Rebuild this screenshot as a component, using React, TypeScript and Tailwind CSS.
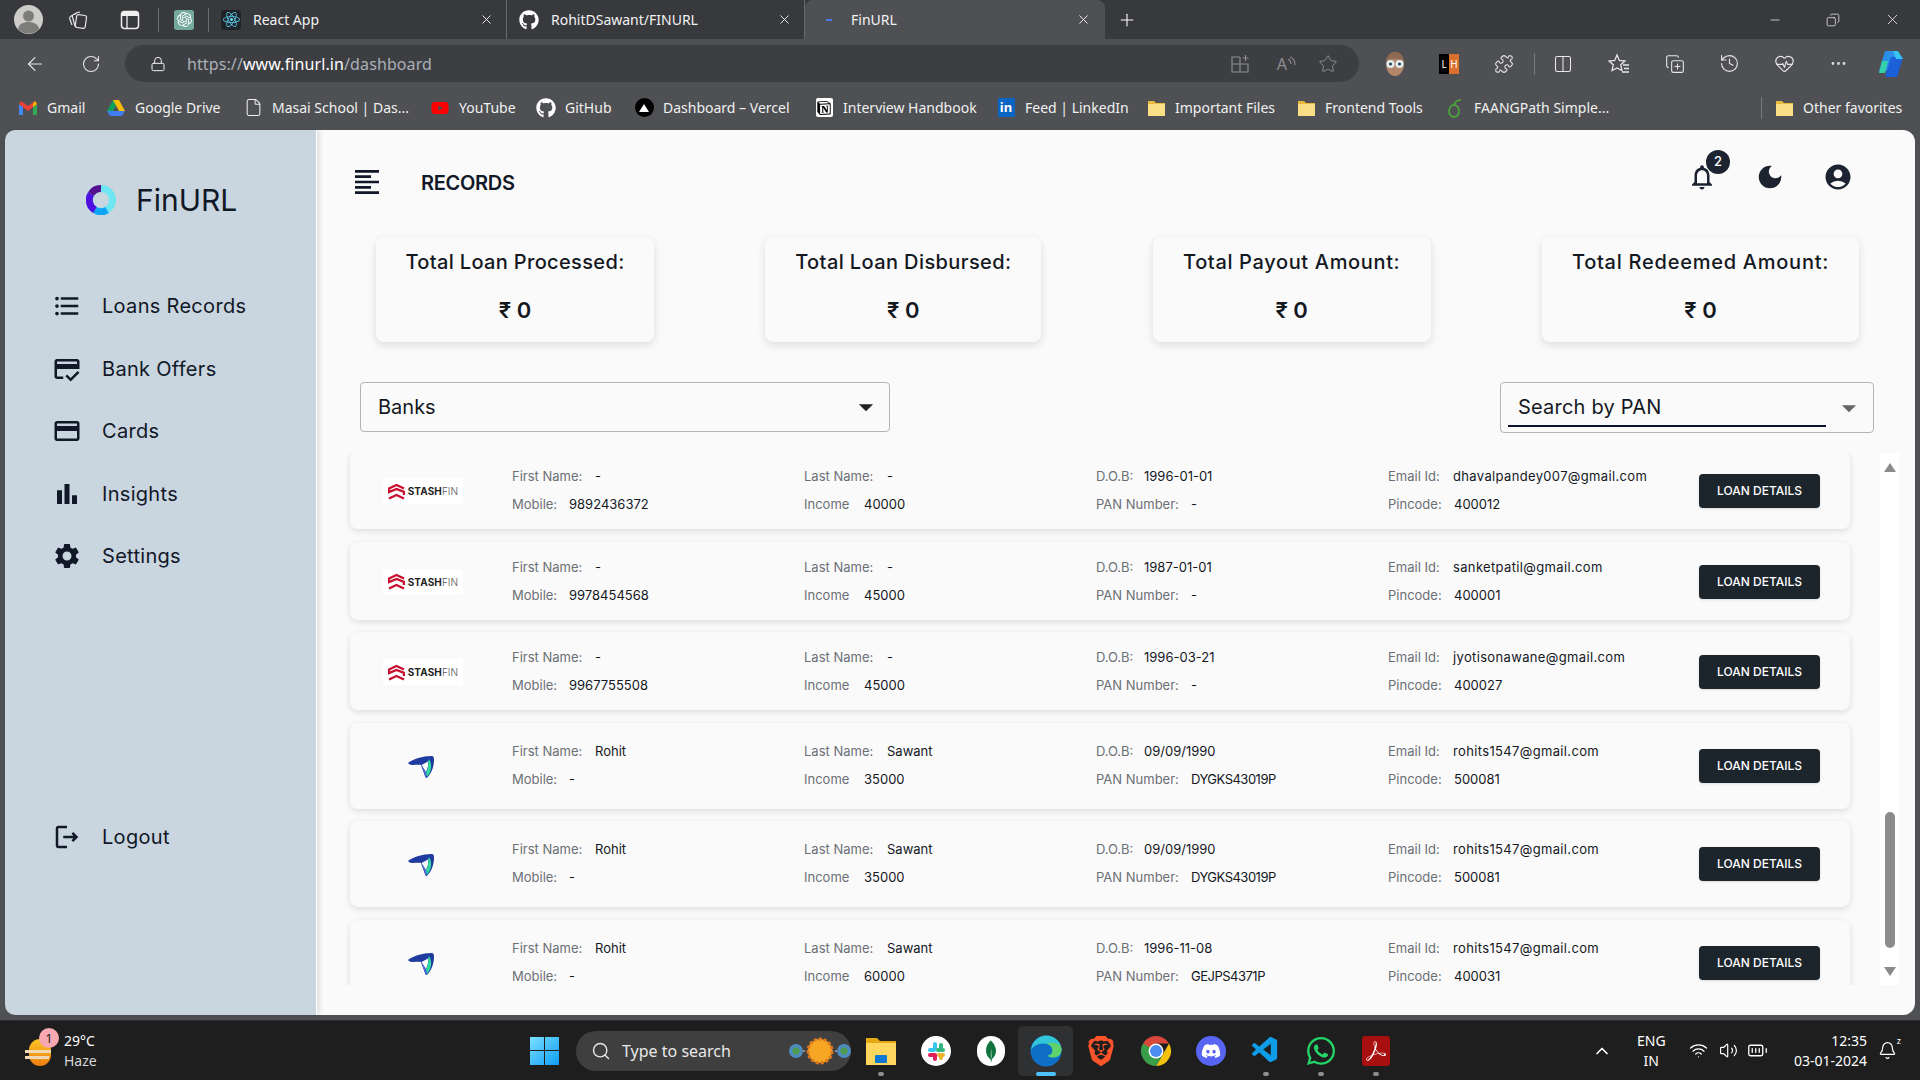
import type { ReactNode } from 'react'
import {
  ArrowLeft,
  RotateCw,
  Lock,
  Star,
  X,
  Plus,
  Minus,
  Copy,
  File,
  Search,
  ChevronUp,
  Wifi,
  Volume2,
  BatteryFull,
  Bell,
  Puzzle,
  Columns2,
  History,
  HeartPulse,
  MoreHorizontal,
  CopyPlus,
} from 'lucide-react'
import {
  MdFormatAlignLeft,
  MdFormatListBulleted,
  MdOutlineCreditScore,
  MdOutlineCreditCard,
  MdBarChart,
  MdSettings,
  MdOutlineLogout,
  MdOutlineNotifications,
  MdDarkMode,
  MdAccountCircle,
  MdArrowDropDown,
} from 'react-icons/md'
import { FaGithub, FaYoutube, FaDiscord, FaWhatsapp, FaReact } from 'react-icons/fa'
import { SiNotion, SiOpenai, SiAdobeacrobatreader, SiBrave, SiMongodb } from 'react-icons/si'
import { VscVscode } from 'react-icons/vsc'

const uiFont = "font-['Noto_Sans',sans-serif]"
const appFont = "font-['Inter',sans-serif]"

function Folder() {
  return (
    <svg width="19" height="18" viewBox="0 0 19 18">
      <path d="M1 2h6l2 2h9v13H1z" fill="#e8b93c" />
      <rect x="1" y="5" width="17" height="12" rx="1" fill="#fbdf86" />
    </svg>
  )
}

function Gmail() {
  return (
    <svg width="20" height="16" viewBox="0 0 20 16">
      <path d="M1 4v11h4V7z" fill="#4285f4" />
      <path d="M15 7v8h4V4z" fill="#34a853" />
      <path d="M1 4l9 7 9-7-2-3-7 5-7-5z" fill="#ea4335" />
      <path d="M15 4l2-3 2 3-4 3z" fill="#fbbc04" />
    </svg>
  )
}

function Drive() {
  return (
    <svg width="20" height="18" viewBox="0 0 20 18">
      <path d="M7 1h6l-6 11H1z" fill="#0fa15a" />
      <path d="M7 1h6l6 11h-6z" fill="#fbbc04" />
      <path d="M1 12l3 5h12l3-5z" fill="#3f7df0" />
    </svg>
  )
}

function Bookmark({ icon, label, className }: { icon: ReactNode; label: string; className: string }) {
  return (
    <div className={`flex items-center gap-[9px] shrink-0 ${className}`}>
      <span className="w-[20px] flex justify-center shrink-0">{icon}</span>
      <span className="whitespace-nowrap">{label}</span>
    </div>
  )
}

function Tab({ icon, label, active = false }: { icon: ReactNode; label: string; active?: boolean }) {
  return (
    <div
      className={`flex items-center h-[39px] shrink-0 text-[14px] ${
        active ? 'w-[300px] bg-[#4f5054] rounded-t-[8px] pl-[14px] pr-[14px]' : 'w-[298px] pl-[12px] pr-[12px] border-r border-[#6a6b6f]'
      }`}
    >
      <span className="w-[20px] flex justify-center mr-[12px]">{icon}</span>
      <span className="flex-1 text-[#f2f2f2]">{label}</span>
      <X size={15} strokeWidth={1.4} className="text-white" />
    </div>
  )
}

function BrowserChrome() {
  const tool = 'text-[#e6e6e6] shrink-0'
  return (
    <div className={`${uiFont} text-[#f0f0f0]`}>
      <div className="h-[39px] bg-[#38393d] flex items-center">
        <svg width="29" height="29" viewBox="0 0 29 29" className="ml-[14px] shrink-0">
          <circle cx="14.5" cy="14.500" r="14.500" fill="#cdccc8" />
          <circle cx="14.500" cy="11" r="5.500" fill="#7c7c7a" />
          <path d="M4 24c1-5 5-7 10.500-7s9.500 2 10.500 7a14.500 14.500 0 0 1-21 0z" fill="#7c7c7a" />
        </svg>
        <svg width="22" height="22" viewBox="0 0 22 22" fill="none" stroke="#e6e6e6" strokeWidth="1.2" className="ml-[24px] shrink-0">
          <rect x="9" y="6" width="10" height="13" rx="2" transform="rotate(8 14 12)" />
          <path d="M9 4.500 6.500 5.500c-1 .5-1.500 1.500-1 2.500l2.500 9" />
          <path d="M13 3 9.500 3.800c-1 .3-1.500 1-1.300 2" />
          <path d="M5 6.500 3.500 7.500c-1 .6-1 1.500-.7 2.500l2.200 6" />
        </svg>
        <svg width="20" height="20" viewBox="0 0 20 20" className="ml-[31px] shrink-0">
          <rect x="1.500" y="1.500" width="17" height="17" rx="3" fill="none" stroke="#efefef" strokeWidth="1.500" />
          <path d="M3 2h14c1 0 1 1 1 2v2H2V4c0-1 0-2 1-2z" fill="#efefef" />
          <path d="M7 6v12" stroke="#efefef" strokeWidth="1.300" />
        </svg>
        <div className="ml-[18px] w-px h-[24px] bg-[#6a6b6f]" />
        <div className="ml-[15px] w-[20px] h-[20px] rounded-[3px] bg-[#74aa9c] flex items-center justify-center">
          <SiOpenai size={15} className="text-white" />
        </div>
        <div className="ml-[14px] w-px h-[24px] bg-[#6a6b6f]" />
        <Tab icon={<span className="w-[20px] h-[20px] bg-[#20232a] rounded-[3px] flex items-center justify-center"><FaReact size={17} className="text-[#61dafb]" /></span>} label="React App" />
        <Tab icon={<FaGithub size={20} className="text-white" />} label="RohitDSawant/FINURL" />
        <Tab active icon={<span className="w-[6px] h-[2px] bg-[#4a7cf0]" />} label="FinURL" />
        <Plus size={20} strokeWidth={1.3} className="ml-[12px] text-white" />
        <div className="ml-auto flex items-center">
          <Minus size={14} strokeWidth={1.3} className="mr-[44px] text-[#eee]" />
          <Copy size={14} strokeWidth={1.3} className="mr-[44px] text-[#eee] -scale-x-100" />
          <X size={17} strokeWidth={1.2} className="mr-[19px] text-[#eee]" />
        </div>
      </div>
      <div className="h-[46px] bg-[#4f5054] flex items-center pt-[3px]">
        <ArrowLeft size={22} strokeWidth={1.3} className={`ml-[24px] ${tool}`} />
        <RotateCw size={20} strokeWidth={1.3} className={`ml-[35px] ${tool}`} />
        <div className="ml-[24px] w-[1234px] h-[37px] rounded-full bg-[#3d3e42] flex items-center shrink-0">
          <Lock size={16} strokeWidth={1.5} className="ml-[25px] text-[#efefef]" />
          <span className="ml-[21px] text-[16px] tracking-[0.1px] text-[#a9b0b8]">
            https://<span className="text-white">www.finurl.in</span>/dashboard
          </span>
          <svg width="20" height="20" viewBox="0 0 20 20" fill="none" stroke="#8c8d90" strokeWidth="1.200" className="ml-auto">
            <path d="M10 3H2v15h16v-8H2M10 3v15" />
            <path d="M15.500 1v6M12.500 4h6" />
          </svg>
          <span className="ml-[27px] text-[16px] leading-none text-[#8c8d90]">A</span>
          <svg width="9" height="16" viewBox="0 0 9 16" fill="none" stroke="#8c8d90" strokeWidth="1.100">
            <path d="M1 3c2 1 3 3 3 5M3 1c3 1 5 4 5 8" />
          </svg>
          <Star size={20} strokeWidth={1.2} className="ml-[22px] mr-[21px] text-[#8c8d90]" />
        </div>
        <svg width="24" height="26" viewBox="0 0 24 26" className="ml-[24px] shrink-0">
          <ellipse cx="12" cy="13" rx="9" ry="12" fill="#b4876b" />
          <path d="M3 10c1-6 5-9 9-9s8 3 9 9c-5-3-13-3-18 0z" fill="#8f6a52" />
          <circle cx="7.500" cy="13" r="4" fill="#dfeef0" />
          <circle cx="16.500" cy="13" r="4" fill="#dfeef0" />
          <circle cx="7.500" cy="13" r="1.500" fill="#2b3a44" />
          <circle cx="16.500" cy="13" r="1.500" fill="#2b3a44" />
        </svg>
        <div className="ml-[32px] w-[20px] h-[20px] flex shrink-0 text-[10px] leading-[20px] text-center text-white">
          <span className="w-1/2 bg-black">L</span>
          <span className="w-1/2 bg-[#d9702b]">H</span>
        </div>
        <Puzzle size={20} strokeWidth={1.3} className={`ml-[35px] ${tool}`} />
        <div className="ml-[20px] w-px h-[22px] bg-[#77787c] shrink-0" />
        <Columns2 size={20} strokeWidth={1.3} className={`ml-[18px] ${tool}`} />
        <svg width="22" height="22" viewBox="0 0 22 22" fill="none" stroke="#e6e6e6" strokeWidth="1.300" className="ml-[35px] shrink-0">
          <path d="M9 2l2.300 5.500 5.700.5-4.300 3.800 1.300 5.700L9 15 4 17.500l1.300-5.700L1 8l5.700-.5z" />
          <path d="M15 12h6M16 15.500h5M14 19h7" />
        </svg>
        <CopyPlus size={20} strokeWidth={1.3} className={`ml-[35px] ${tool}`} />
        <History size={21} strokeWidth={1.3} className={`ml-[34px] ${tool}`} />
        <HeartPulse size={21} strokeWidth={1.3} className={`ml-[34px] ${tool}`} />
        <MoreHorizontal size={19} strokeWidth={1.5} className={`ml-[34px] ${tool}`} />
        <svg width="30" height="30" viewBox="0 0 30 30" className="ml-[28px] shrink-0">
          <path d="M9 2h12l-6 20H3z" fill="#2a8fe6" />
          <path d="M6 12h6l-3 12H3z" fill="#35d0a8" />
          <path d="M15 8h12l-6 20H9z" fill="#1b5fd9" />
          <path d="M17 2h5l5 8h-7z" fill="#38c4f2" />
        </svg>
      </div>
      <div className="h-[45px] bg-[#4f5054] flex items-center pl-[18px] text-[14px] text-[#f0f0f0] overflow-hidden">
        <Bookmark className="w-[88px]" icon={<Gmail />} label="Gmail" />
        <Bookmark className="w-[137px]" icon={<Drive />} label="Google Drive" />
        <Bookmark className="w-[187px] whitespace-nowrap" icon={<File size={19} strokeWidth={1.3} />} label="Masai School | Das..." />
        <Bookmark className="w-[106px]" icon={<FaYoutube size={18} className="text-[#ff0000]" />} label="YouTube" />
        <Bookmark className="w-[98px]" icon={<FaGithub size={20} className="text-white" />} label="GitHub" />
        <Bookmark
          className="w-[180px]"
          icon={
            <span className="w-[19px] h-[19px] rounded-full bg-black flex items-center justify-center">
              <span className="w-0 h-0 border-x-[5px] border-x-transparent border-b-[8px] border-b-white" />
            </span>
          }
          label="Dashboard – Vercel"
        />
        <Bookmark
          className="w-[182px]"
          icon={
            <span className="w-[17px] h-[19px] bg-white rounded-[2px] flex items-center justify-center">
              <SiNotion size={14} className="text-black" />
            </span>
          }
          label="Interview Handbook"
        />
        <Bookmark
          className="w-[150px]"
          icon={<span className="w-[17px] h-[19px] bg-[#0a66c2] text-white text-[13px] font-bold leading-[19px] text-center">in</span>}
          label="Feed | LinkedIn"
        />
        <Bookmark className="w-[150px]" icon={<Folder />} label="Important Files" />
        <Bookmark className="w-[149px]" icon={<Folder />} label="Frontend Tools" />
        <Bookmark
          className="w-[316px]"
          icon={
            <svg width="18" height="20" viewBox="0 0 18 20" fill="none" stroke="#4caf35" strokeWidth="1.5">
              <ellipse cx="8" cy="13" rx="5" ry="6" />
              <path d="M8 7c1-3 4-5 7-5" />
            </svg>
          }
          label="FAANGPath Simple..."
        />
        <div className="w-px h-[22px] bg-[#77787c] shrink-0 mr-[12px]" />
        <Bookmark icon={<Folder />} label="Other favorites" className="" />
      </div>
    </div>
  )
}

const navItems = [
  { label: 'Loans Records', icon: <MdFormatListBulleted size={30} /> },
  { label: 'Bank Offers', icon: <MdOutlineCreditScore size={30} /> },
  { label: 'Cards', icon: <MdOutlineCreditCard size={30} /> },
  { label: 'Insights', icon: <MdBarChart size={30} /> },
  { label: 'Settings', icon: <MdSettings size={30} /> },
]

function NavItem({ label, icon, className = '' }: { label: string; icon: ReactNode; className?: string }) {
  return (
    <div className={`h-[62.5px] flex items-center gap-[20px] pl-[47px] text-[20px] text-[#111827] tracking-[0.3px] ${className}`}>
      {icon}
      <span>{label}</span>
    </div>
  )
}

function Sidebar() {
  return (
    <aside className="relative z-10 w-[312px] shrink-0 bg-[#c9d5df] border-r border-white rounded-l-[10px] shadow-[3px_0_4px_rgba(0,0,0,0.1)]">
      <div className="h-[140px] mb-[5px] flex items-center pl-[81px]">
        <svg width="30" height="30" viewBox="0 0 30 30" fill="none" strokeWidth="7">
          <circle cx="15" cy="15" r="11.5" stroke="#6ee7f2" />
          <path d="M21 25A11.5 11.5 0 0 1 9 25" stroke="#0ea5f5" />
          <path d="M9 25A11.5 11.5 0 0 1 5 9" stroke="#4f0fe0" />
          <path d="M5 9A11.5 11.5 0 0 1 15 3.5" stroke="#54108f" />
        </svg>
        <span className="ml-[20px] text-[30px] text-[#111827]">FinURL</span>
      </div>
      {navItems.map((item) => (
        <NavItem key={item.label} {...item} />
      ))}
      <NavItem className="mt-[218px]" label="Logout" icon={<MdOutlineLogout size={30} />} />
    </aside>
  )
}

const statCards = [
  { title: 'Total Loan Processed:', width: 'w-[278px]', spacing: 'tracking-[0.35px]' },
  { title: 'Total Loan Disbursed:', width: 'w-[276px]', spacing: 'tracking-[0.4px]' },
  { title: 'Total Payout Amount:', width: 'w-[278px]', spacing: 'tracking-[0.65px]' },
  { title: 'Total Redeemed Amount:', width: 'w-[317px]', spacing: 'tracking-[0.75px]' },
]

function StashfinLogo() {
  return (
    <div className="w-[80px] h-[26px] bg-white flex items-center justify-center gap-[3px] text-[10px] leading-none">
      <svg width="17" height="17" viewBox="0 0 17 17" fill="none" stroke="#c8102e" strokeWidth="2.4">
        <path d="M16 5.500 8.500 2 1 5.500V9l7.500-3L16 9v3" />
        <path d="M1 15.500 8.500 12l7.500 3.500" />
      </svg>
      <span className="font-bold text-[#222] tracking-[0.1px]">
        STASH<span className="font-light text-[#555]">FIN</span>
      </span>
    </div>
  )
}

function PlaneLogo() {
  return (
    <svg width="28" height="25" viewBox="0 0 28 25" className="ml-[24px] mt-[3px]">
      <path d="M1 8C6 4 16 1 24 1c3 0 3 2 3 4 0 7-3 14-7 18-1 0-2-1-2-2l-4-11C10 9 5 11 2 9z" fill="#1f3b9f" />
      <path d="M18 21c-1-4-3-8-4-11l5 7 1 6c-1 0-2-1-2-2z" fill="#4a66d6" />
      <path d="M14.500 10 21 6.500c1 4-1 8-2 10.500z" fill="#fafafa" />
      <path d="M22 4c4 6 2 13-2 18l-1-5c2-3 3-8 2-10.500z" fill="#2fdba0" />
    </svg>
  )
}

function Field({
  label,
  value,
  labelWidth,
  valueClass = '',
}: {
  label: string
  value: string
  labelWidth: string
  valueClass?: string
}) {
  return (
    <div className="flex items-center h-[20px] whitespace-nowrap">
      <span className={`text-[#6b6f76] ${labelWidth}`}>{label}</span>
      <span className={`text-[#14181f] ${valueClass}`}>{value}</span>
    </div>
  )
}

type Row = {
  logo: 'stash' | 'plane'
  first: string
  last: string
  mobile: string
  income: string
  dob: string
  pan: string
  email: string
  pin: string
}

const rows: Row[] = [
  { logo: 'stash', first: '-', last: '-', mobile: '9892436372', income: '40000', dob: '1996-01-01', pan: '-', email: 'dhavalpandey007@gmail.com', pin: '400012' },
  { logo: 'stash', first: '-', last: '-', mobile: '9978454568', income: '45000', dob: '1987-01-01', pan: '-', email: 'sanketpatil@gmail.com', pin: '400001' },
  { logo: 'stash', first: '-', last: '-', mobile: '9967755508', income: '45000', dob: '1996-03-21', pan: '-', email: 'jyotisonawane@gmail.com', pin: '400027' },
  { logo: 'plane', first: 'Rohit', last: 'Sawant', mobile: '-', income: '35000', dob: '09/09/1990', pan: 'DYGKS43019P', email: 'rohits1547@gmail.com', pin: '500081' },
  { logo: 'plane', first: 'Rohit', last: 'Sawant', mobile: '-', income: '35000', dob: '09/09/1990', pan: 'DYGKS43019P', email: 'rohits1547@gmail.com', pin: '500081' },
  { logo: 'plane', first: 'Rohit', last: 'Sawant', mobile: '-', income: '60000', dob: '1996-11-08', pan: 'GEJPS4371P', email: 'rohits1547@gmail.com', pin: '400031' },
]

function RecordRow({ row }: { row: Row }) {
  return (
    <div
      className={`shrink-0 w-[1500px] rounded-[8px] bg-[#fafafa] shadow-[0_2px_6px_rgba(0,0,0,0.12)] flex items-center text-[13px] ${
        row.logo === 'stash' ? 'h-[78px] pt-[2px]' : 'h-[86px]'
      }`}
    >
      <div className="w-[162px] pl-[33px] shrink-0">{row.logo === 'stash' ? <StashfinLogo /> : <PlaneLogo />}</div>
      <div className="w-[292px] shrink-0 flex flex-col gap-[8px]">
        <Field label="First Name:" labelWidth="w-[83px]" value={row.first} />
        <Field label="Mobile:" labelWidth="w-[57px]" value={row.mobile} />
      </div>
      <div className="w-[292px] shrink-0 flex flex-col gap-[8px]">
        <Field label="Last Name:" labelWidth="w-[83px]" value={row.last} />
        <Field label="Income" labelWidth="w-[60px]" value={row.income} />
      </div>
      <div className="w-[292px] shrink-0 flex flex-col gap-[8px]">
        <Field label="D.O.B:" labelWidth="w-[48px]" value={row.dob} />
        <Field label="PAN Number:" labelWidth="w-[95px]" value={row.pan} valueClass="tracking-[-0.5px]" />
      </div>
      <div className="w-[311px] shrink-0 flex flex-col gap-[8px]">
        <Field label="Email Id:" labelWidth="w-[65px]" value={row.email} valueClass="tracking-[0.35px]" />
        <Field label="Pincode:" labelWidth="w-[66px]" value={row.pin} />
      </div>
      <button type="button" className="w-[121px] h-[34px] rounded-[4px] bg-[#1c252c] text-white text-[12px] font-medium shadow-sm">
        LOAN DETAILS
      </button>
    </div>
  )
}

function Dashboard() {
  return (
    <main className="flex-1 min-w-0 bg-[#fafafa] rounded-r-[12px] text-[#111827]">
      <header className="h-[107px] flex items-start">
        <MdFormatAlignLeft size={32} className="ml-[34px] mt-[36px]" />
        <h1 className="ml-[38px] mt-[40px] text-[20px] font-semibold leading-[26px] tracking-[-0.3px]">RECORDS</h1>
        <div className="ml-auto mr-[62px] mt-[32px] flex items-center gap-[38px] text-[#1c2431]">
          <div className="relative ml-[1px]">
            <MdOutlineNotifications size={30} />
            <span className="absolute -top-[12px] left-[19px] w-[24px] h-[24px] rounded-full bg-[#1c2431] text-white text-[13px] font-medium flex items-center justify-center">
              2
            </span>
          </div>
          <MdDarkMode size={30} />
          <MdAccountCircle size={30} />
        </div>
      </header>

      <section className="flex justify-between pl-[59px] pr-[56px]">
        {statCards.map((card) => (
          <div key={card.title} className={`${card.width} h-[105px] rounded-[8px] bg-[#fafafa] shadow-[0_3px_8px_rgba(0,0,0,0.12)] text-center`}>
            <p className={`mt-[11px] text-[20px] font-medium leading-[28px] text-[#14181f] ${card.spacing}`}>{card.title}</p>
            <p className="mt-[20px] text-[22px] font-semibold leading-[28px] text-[#14181f]">₹ 0</p>
          </div>
        ))}
      </section>

      <section className="mt-[40px] flex justify-between pl-[43px] pr-[41px]">
        <div className="w-[530px] h-[50px] rounded-[4px] border border-[#b4b4b4] flex items-center pl-[17px] pr-[6px] text-[20px] text-[#14181f]">
          Banks
          <MdArrowDropDown size={34} className="ml-auto text-[#222]" />
        </div>
        <div className="w-[374px] h-[51px] rounded-[4px] border border-[#b4b4b4] flex items-center pl-[7px] pr-[7px] text-[20px] text-[#14181f]">
          <span className="w-[318px] h-[38px] border-b-2 border-[#0d1030] pl-[10px] leading-[36px] tracking-[0.2px]">Search by PAN</span>
          <MdArrowDropDown size={34} className="ml-auto text-[#666]" />
        </div>
      </section>

      <section className="mt-[20px] ml-[28px] flex h-[532px]">
        <div className="w-[1535px] h-[532px] pl-[5px] overflow-hidden">
          <div className="-mt-[2px] flex flex-col gap-[12.5px]">
            {rows.map((row) => (
              <RecordRow key={row.email + row.dob + row.mobile} row={row} />
            ))}
          </div>
        </div>
        <div className="w-[19px] h-[532px] bg-white flex flex-col items-center">
          <span className="mt-[10px] w-0 h-0 border-x-[6px] border-x-transparent border-b-[9px] border-b-[#8a8a8a]" />
          <span className="mt-[340px] w-[10px] h-[136px] rounded-full bg-[#8c8c8c]" />
          <span className="mt-[19px] w-0 h-0 border-x-[6px] border-x-transparent border-t-[9px] border-t-[#8a8a8a]" />
        </div>
      </section>
    </main>
  )
}

function SlackIcon() {
  return (
    <svg width="30" height="30" viewBox="0 0 30 30">
      <circle cx="15" cy="15" r="15" fill="#fff" />
      <rect x="12" y="6" width="4" height="8" rx="2" fill="#36c5f0" />
      <rect x="7" y="12" width="8" height="4" rx="2" fill="#36c5f0" />
      <rect x="18" y="7" width="4" height="8" rx="2" fill="#2eb67d" />
      <rect x="15" y="12" width="9" height="4" rx="2" fill="#2eb67d" />
      <rect x="7" y="17" width="8" height="4" rx="2" fill="#e01e5a" />
      <rect x="12" y="17" width="4" height="8" rx="2" fill="#e01e5a" />
      <rect x="16" y="17" width="8" height="4" rx="2" fill="#ecb22e" />
      <rect x="18" y="17" width="4" height="7" rx="2" fill="#ecb22e" />
    </svg>
  )
}

function EdgeIcon() {
  return (
    <svg width="32" height="32" viewBox="0 0 32 32">
      <circle cx="16" cy="16" r="15.5" fill="#0f6fc6" />
      <path d="M1 15C2 6 9 .5 16 .5c9 0 15.5 7 15.5 14 0 5-4 8-8 8-3 0-5-1-6-2 3 0 5-2 5-5 0-4-4-7-9-7-6 0-11 3-12.5 7z" fill="#33c5d8" />
      <path d="M31.5 14.5c0 5-4 8-8 8-3 0-5-1-6-2 3 0 5-2 5-5 0-3-2-6-6-7 8-2 15 1 15 6z" fill="#5fd36a" />
    </svg>
  )
}

function ChromeIcon() {
  return (
    <svg width="32" height="32" viewBox="0 0 32 32">
      <path d="M3 8.500A15 15 0 0 1 29 8.500H16L9.500 19.500z" fill="#d9473a" />
      <path d="M29 8.500A15 15 0 0 1 16 31l7-12z" fill="#f4c20d" />
      <path d="M3 8.500A15 15 0 0 0 16 31l7-12-7-3z" fill="#3a9d4a" />
      <circle cx="16" cy="16" r="7.500" fill="#fff" />
      <circle cx="16" cy="16" r="6" fill="#4a8cf0" />
    </svg>
  )
}

function TaskSlot({ children, dot = false, active = false }: { children: ReactNode; dot?: boolean; active?: boolean }) {
  return (
    <div className={`relative w-[55px] h-[50px] shrink-0 flex items-center justify-center rounded-[5px] ${active ? 'bg-[#2f3031]' : ''}`}>
      {children}
      {dot && <span className="absolute bottom-[0px] w-[6px] h-[4px] rounded-full bg-[#8e8e8e]" />}
      {active && <span className="absolute bottom-[0px] w-[20px] h-[4px] rounded-full bg-[#4cc2ff]" />}
    </div>
  )
}

function Taskbar() {
  return (
    <footer className={`h-[60px] bg-[#1e1e1e] border-t border-[#2b2b2b] flex items-center text-white ${uiFont}`}>
      <div className="w-[530px] shrink-0 flex items-center">
        <div className="relative ml-[25px] w-[30px] h-[30px]">
          <div className="absolute left-[4px] top-[3px] w-[22px] h-[27px] rounded-full bg-gradient-to-b from-[#f9c623] to-[#ee7d12]" />
          <div className="absolute left-0 top-[14px] w-[26px] h-[3px] bg-[#f1d9b4]" />
          <div className="absolute left-0 top-[20px] w-[24px] h-[3px] bg-[#f1d9b4]" />
          <div className="absolute left-[14px] -top-[8px] w-[20px] h-[20px] rounded-full bg-[#f7a8b0] text-[#222] text-[13px] leading-[20px] text-center">1</div>
        </div>
        <div className="ml-[9px] text-[14px] leading-[20px]">
          <div>29°C</div>
          <div className="text-[#d6d6d6]">Haze</div>
        </div>
      </div>
      <svg width="29" height="29" viewBox="0 0 29 29" className="shrink-0">
        <defs>
          <linearGradient id="winBlue" x1="0" y1="0" x2="1" y2="1">
            <stop offset="0" stopColor="#7be0ff" />
            <stop offset="1" stopColor="#0f9cf5" />
          </linearGradient>
        </defs>
        <path d="M0 1h14v13H0zM15 1h14v13H15zM0 15h14v14H0zM15 15h14v14H15z" fill="url(#winBlue)" />
      </svg>
      <div className="ml-[17px] mr-[2px] w-[275px] h-[40px] shrink-0 rounded-full bg-[#3f3f3f] flex items-center text-[#e8e8e8]">
        <Search size={20} strokeWidth={1.7} className="ml-[15px]" />
        <span className="ml-[11px] text-[16px]">Type to search</span>
        <svg width="62" height="34" viewBox="0 0 62 34" className="ml-auto">
          <circle cx="7" cy="17" r="7" fill="#4f8bbd" />
          <circle cx="55" cy="17" r="7" fill="#4f8bbd" />
          <circle cx="7" cy="17" r="3.500" fill="#4d9d4f" />
          <circle cx="55" cy="17" r="3.500" fill="#4d9d4f" />
          <path d="M14 17h34" stroke="#e8e8e8" strokeWidth="1" strokeDasharray="2 2" />
          <circle cx="31" cy="17" r="12" fill="#f5a623" stroke="#e2781c" strokeWidth="3" strokeDasharray="3 2" />
        </svg>
      </div>
      <TaskSlot dot>
        <svg width="30" height="28" viewBox="0 0 30 28">
          <path d="M0 1h11l3 3h16v24H0z" fill="#e4a813" />
          <rect y="6" width="30" height="22" fill="#ffd75e" />
          <rect x="9" y="18" width="12" height="8" rx="1" fill="#0f78d4" />
        </svg>
      </TaskSlot>
      <TaskSlot><SlackIcon /></TaskSlot>
      <TaskSlot>
        <div className="w-[28px] h-[30px] rounded-full bg-white flex items-center justify-center">
          <SiMongodb size={22} className="text-[#10733e]" />
        </div>
      </TaskSlot>
      <TaskSlot active><EdgeIcon /></TaskSlot>
      <TaskSlot><SiBrave size={30} className="text-[#fb542b]" /></TaskSlot>
      <TaskSlot><ChromeIcon /></TaskSlot>
      <TaskSlot>
        <div className="w-[30px] h-[30px] rounded-full bg-[#5865f2] flex items-center justify-center">
          <FaDiscord size={20} className="text-white" />
        </div>
      </TaskSlot>
      <TaskSlot dot><VscVscode size={31} className="text-[#0e9be8]" /></TaskSlot>
      <TaskSlot dot><FaWhatsapp size={32} className="text-[#25d366]" /></TaskSlot>
      <TaskSlot dot>
        <div className="w-[28px] h-[30px] rounded-[3px] bg-[#a80f0f] flex items-center justify-center">
          <SiAdobeacrobatreader size={20} className="text-white" />
        </div>
      </TaskSlot>
      <ChevronUp size={20} strokeWidth={2} className="ml-[189px] shrink-0" />
      <div className="ml-[25px] text-[14px] leading-[20px] text-center shrink-0">
        <div>ENG</div>
        <div>IN</div>
      </div>
      <Wifi size={19} strokeWidth={1.6} className="ml-[23px] shrink-0" />
      <Volume2 size={19} strokeWidth={1.5} className="ml-[11px] shrink-0" />
      <BatteryFull size={21} strokeWidth={1.5} className="ml-[9px] shrink-0" />
      <div className="ml-auto text-[14px] leading-[20px] text-right">
        <div>12:35</div>
        <div>03-01-2024</div>
      </div>
      <div className="relative ml-[11px] mr-[23px] shrink-0">
        <Bell size={19} strokeWidth={1.5} />
        <span className="absolute -top-[5px] -right-[4px] text-[9px] leading-none">z</span>
      </div>
    </footer>
  )
}

export default function App() {
  return (
    <div className={`w-[1920px] h-[1080px] overflow-hidden flex flex-col bg-[#4f5054] ${appFont}`}>
      <BrowserChrome />
      <div className="h-[885px] flex pl-[5px] pr-[5px] shrink-0">
        <Sidebar />
        <Dashboard />
      </div>
      <div className="h-[5px] shrink-0" />
      <Taskbar />
    </div>
  )
}
